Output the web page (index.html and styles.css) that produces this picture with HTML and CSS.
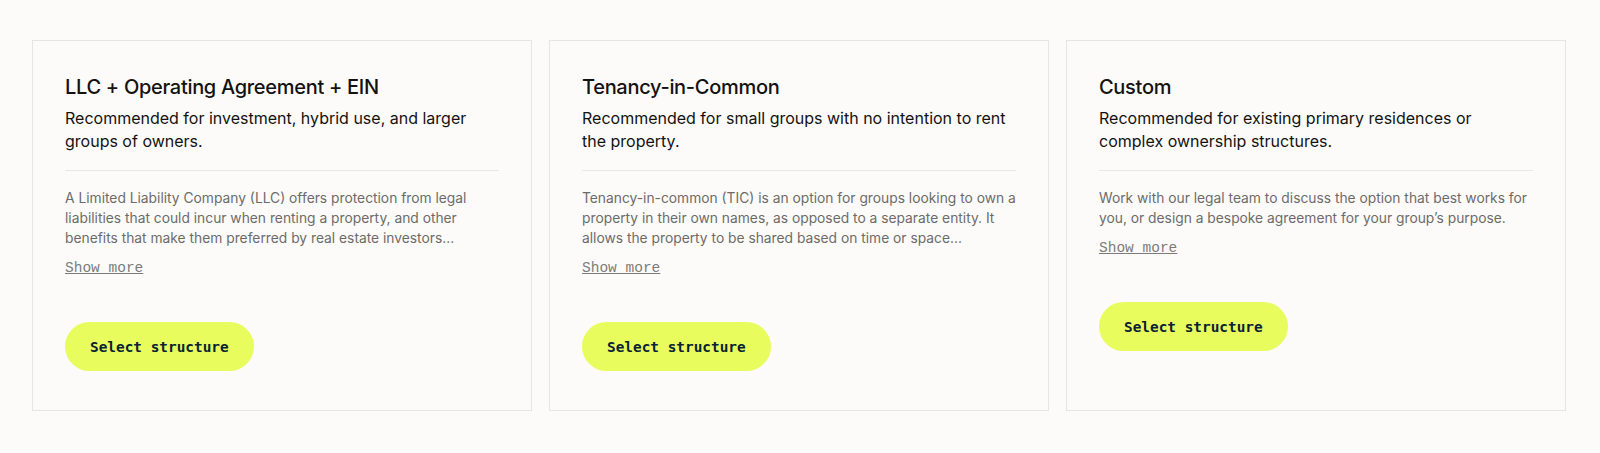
FILE: index.html
```html
<!DOCTYPE html>
<html lang="en">
<head>
    <meta charset="UTF-8">
    <meta name="viewport" content="width=device-width, initial-scale=1.0">
    <title>Ownership structures</title>
    <link rel="stylesheet" href="styles.css">
</head>
<body>
    <div class="cards">
        <div class="card">
            <h3>LLC + Operating Agreement + EIN</h3>
            <p class="lead">Recommended for investment, hybrid use, and larger groups of owners.</p>
            <p class="desc">A Limited Liability Company (LLC) offers protection from legal liabilities that could incur when renting a property, and other benefits that make them preferred by real estate investors...</p>
            <a class="more" href="#">Show more</a>
            <button class="select">Select structure</button>
        </div>
        <div class="card">
            <h3>Tenancy-in-Common</h3>
            <p class="lead">Recommended for small groups with no intention to rent the property.</p>
            <p class="desc">Tenancy-in-common (TIC) is an option for groups looking to own a property in their own names, as opposed to a separate entity. It allows the property to be shared based on time or space...</p>
            <a class="more" href="#">Show more</a>
            <button class="select">Select structure</button>
        </div>
        <div class="card">
            <h3>Custom</h3>
            <p class="lead">Recommended for existing primary residences or complex ownership structures.</p>
            <p class="desc">Work with our legal team to discuss the option that best works for you, or design a bespoke agreement for your group’s purpose.</p>
            <a class="more" href="#">Show more</a>
            <button class="select">Select structure</button>
        </div>
    </div>
</body>
</html>
```

FILE: styles.css
```css
body {
    margin: 0;
    background: #fcfbfa;
    font-family: Inter, "Noto Sans", sans-serif;
    color: #111;
}
.cards {
    display: grid;
    grid-template-columns: repeat(3, 500px);
    gap: 17px;
    padding: 40px 32px 42px;
}
.card {
    border: 1px solid #e6e5e3;
    padding: 32px 32px 39px;
    display: flex;
    flex-direction: column;
    align-items: flex-start;
}
.card h3 {
    margin: 0;
    font-size: 20px;
    font-weight: 500;
    line-height: 28px;
    letter-spacing: -0.3px;
    color: #141210;
}
.lead {
    margin: 6px 0 0;
    width: 100%;
    font-size: 16px;
    line-height: 23px;
    color: #141210;
    padding-bottom: 17px;
    border-bottom: 1px solid #e8e7e5;
}
.desc {
    margin: 17px 0 0;
    font-size: 13.8px;
    line-height: 20px;
    color: #6d6b69;
}
.more {
    margin-top: 12px;
    font-family: "Liberation Mono", monospace;
    font-size: 14.5px;
    color: #7d7b79;
}
.select {
    margin-top: 46px;
    height: 49px;
    padding: 0 25px;
    border: none;
    border-radius: 25px;
    background: #e8fc5e;
    color: #0a2233;
    font-family: "DejaVu Sans Mono", monospace;
    font-size: 14.4px;
    font-weight: bold;
    cursor: pointer;
}
```
